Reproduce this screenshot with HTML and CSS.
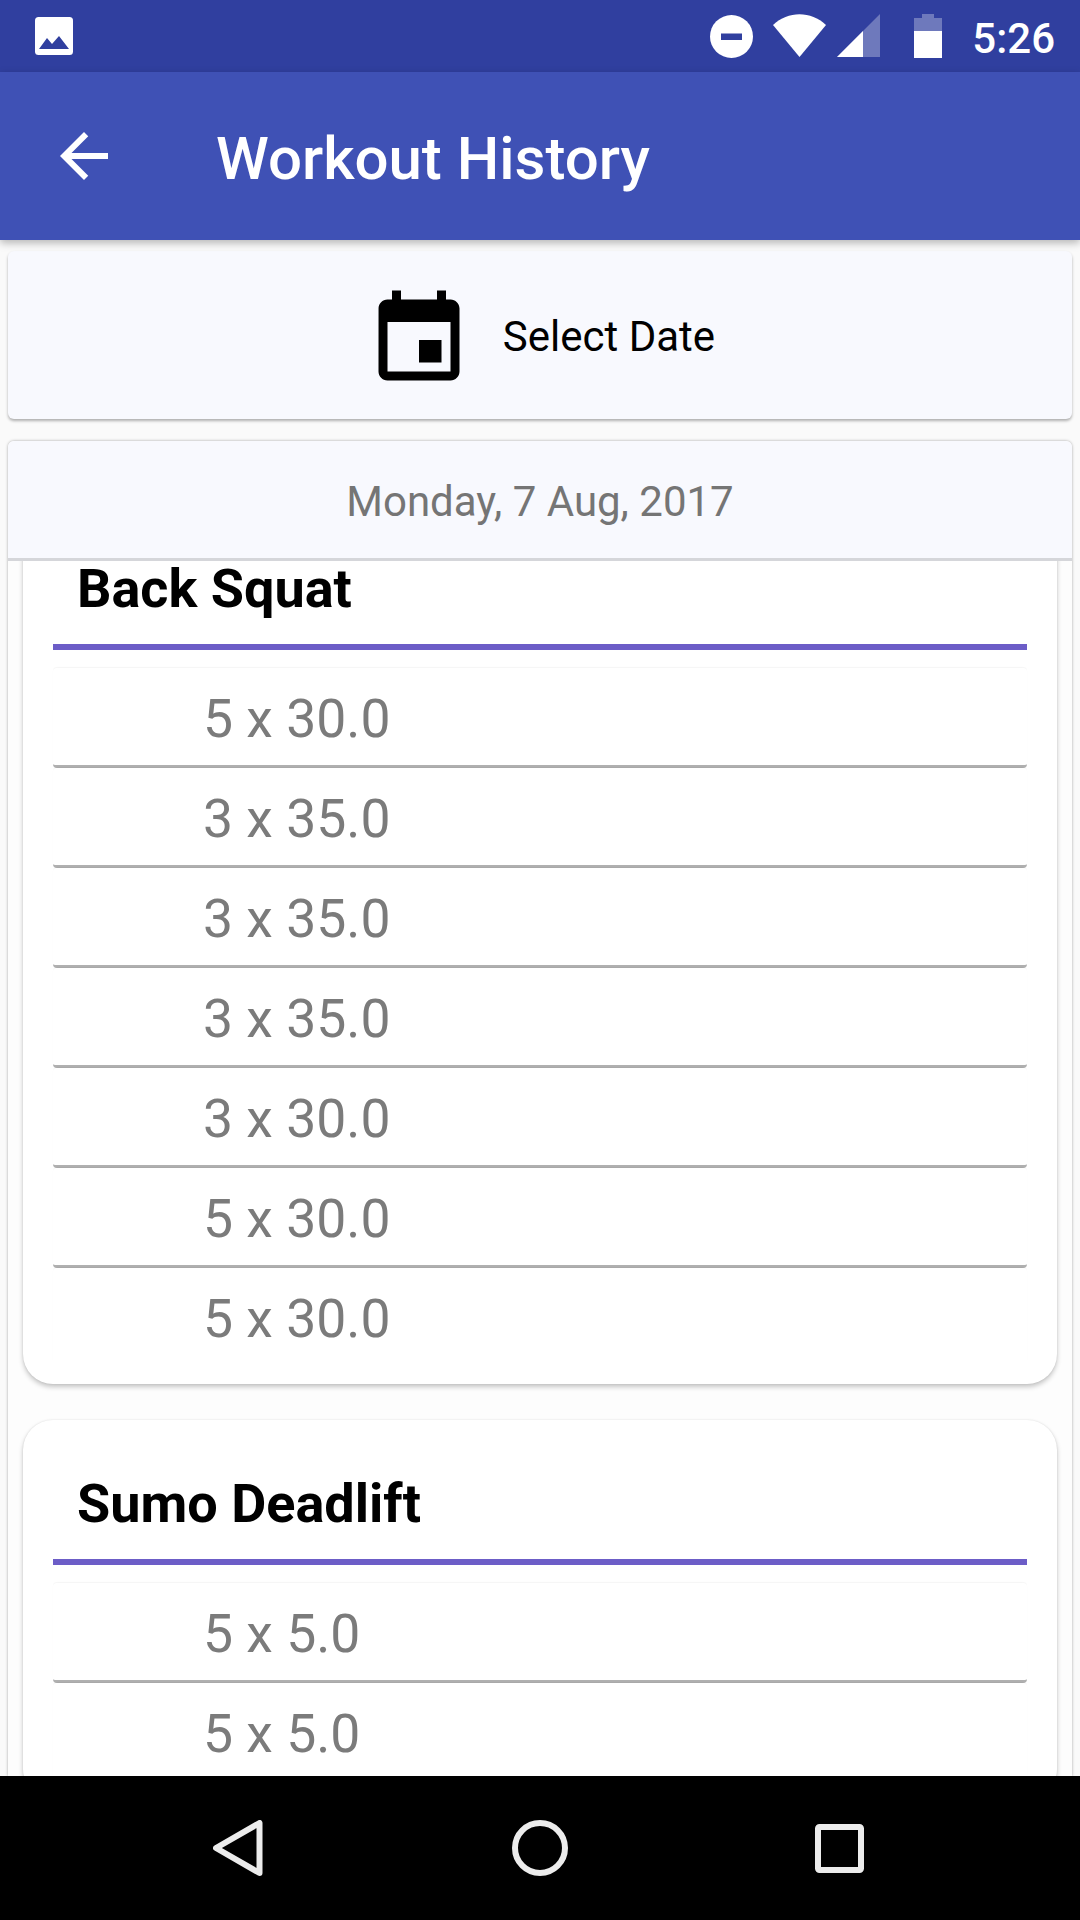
FILE: index.html
```html
<!DOCTYPE html>
<html lang="en">
<head>
<meta charset="utf-8">
<title>Workout History</title>
<link rel="stylesheet" href="styles.css">
</head>
<body>
<div class="phone">
  <header class="status-bar">
    <svg class="ic-picture" viewBox="0 0 38 38"><rect width="38" height="38" rx="3.5" fill="#fff"/><path d="M4 32 L12 21 L17 27 L24 19 L34 32 Z" fill="#303f9f"/></svg>
    <div class="status-right">
      <svg class="ic-dnd" viewBox="0 0 43 43"><circle cx="21.5" cy="21.5" r="21.5" fill="#fff"/><rect x="11" y="18.5" width="21" height="6.5" fill="#303f9f"/></svg>
      <svg class="ic-wifi" viewBox="0 0 53 43"><path d="M0 11 C15 -3.5 38 -3.5 53 11 L26.5 43 Z" fill="#fff"/></svg>
      <svg class="ic-signal" viewBox="0 0 43 43"><path d="M0 43 L43 0 V43 Z" fill="#fff" fill-opacity=".3"/><path d="M0 43 L26 17 V43 Z" fill="#fff"/></svg>
      <svg class="ic-battery" viewBox="0 0 28 44"><path d="M8 0 H20 V4 H28 V17 H0 V4 H8 Z" fill="#fff" fill-opacity=".3"/><rect y="17" width="28" height="27" fill="#fff"/></svg>
      <span class="clock">5:26</span>
    </div>
  </header>

  <div class="toolbar">
    <svg class="ic-back" viewBox="0 0 24 24"><path d="M20 11H7.83l5.59-5.59L12 4l-8 8 8 8 1.41-1.41L7.83 13H20v-2z" fill="#fff"/></svg>
    <h1 class="toolbar-title">Workout History</h1>
  </div>

  <main class="content">
    <section class="select-date">
      <svg class="ic-event" viewBox="0 0 24 24"><path d="M17 12h-5v5h5v-5zM16 1v2H8V1H6v2H5c-1.11 0-1.99.9-1.99 2L3 19c0 1.1.89 2 2 2h14c1.1 0 2-.9 2-2V5c0-1.1-.9-2-2-2h-1V1h-2zm3 18H5V8h14v11z" fill="#000"/></svg>
      <span class="select-label">Select Date</span>
    </section>

    <section class="history">
      <div class="history-date">Monday, 7 Aug, 2017</div>
      <div class="history-scroll">
        <div class="history-list">
          <article class="exercise">
            <h2 class="exercise-name">Back Squat</h2>
            <div class="exercise-rule"></div>
            <ul class="sets">
              <li class="set">5 x 30.0</li>
              <li class="set">3 x 35.0</li>
              <li class="set">3 x 35.0</li>
              <li class="set">3 x 35.0</li>
              <li class="set">3 x 30.0</li>
              <li class="set">5 x 30.0</li>
              <li class="set">5 x 30.0</li>
            </ul>
          </article>
          <article class="exercise">
            <h2 class="exercise-name">Sumo Deadlift</h2>
            <div class="exercise-rule"></div>
            <ul class="sets">
              <li class="set">5 x 5.0</li>
              <li class="set">5 x 5.0</li>
            </ul>
          </article>
        </div>
      </div>
    </section>
  </main>

  <nav class="nav-bar">
    <div class="nav-btn"><svg class="ic-nav-back" viewBox="0 0 50 56"><path d="M46.5 3 V53 L3 28 Z" fill="none" stroke="#ececec" stroke-width="6" stroke-linejoin="round"/></svg></div>
    <div class="nav-btn"><svg class="ic-nav-home" viewBox="0 0 56 56"><circle cx="28" cy="28" r="25" fill="none" stroke="#ececec" stroke-width="6"/></svg></div>
    <div class="nav-btn"><svg class="ic-nav-recent" viewBox="0 0 49 49"><rect x="3" y="3" width="43" height="43" rx="1.5" fill="none" stroke="#ececec" stroke-width="6"/></svg></div>
  </nav>
</div>
</body>
</html>
```
FILE: styles.css
```css
* { box-sizing: border-box; }
html, body { margin: 0; padding: 0; }
body { font-family: Roboto, "Noto Sans", sans-serif; background: #fafafa; }
svg { display: block; flex: none; }

.phone { width: 1080px; height: 1920px; display: flex; flex-direction: column; overflow: hidden; background: #fafafa; }

.status-bar { height: 72px; flex: none; background: #303f9f; display: flex; align-items: flex-start; padding: 14px 25px 0 35px; }
.ic-picture { width: 38px; height: 38px; margin-top: 3px; }
.status-right { margin-left: auto; display: flex; align-items: flex-start; }
.ic-dnd { width: 43px; height: 43px; margin-top: 1px; }
.ic-wifi { width: 53px; height: 43px; margin-left: 20px; }
.ic-signal { width: 43px; height: 43px; margin-left: 11px; }
.ic-battery { width: 28px; height: 44px; margin-left: 34px; }
.clock { font-size: 42px; font-weight: 500; line-height: 44px; color: #fff; margin-left: 30px; margin-top: 3px; }

.toolbar { height: 168px; flex: none; background: #3f51b5; display: flex; align-items: center; padding-left: 48px; position: relative; z-index: 2; box-shadow: 0 3px 8px rgba(0,0,0,.28); }
.ic-back { width: 72px; height: 72px; }
.toolbar-title { margin: 0 0 0 96px; padding-top: 5px; font-size: 60px; font-weight: 500; color: #fff; line-height: 72px; }

.content { flex: 1; min-height: 0; display: flex; flex-direction: column; padding: 11px 8px 0; gap: 22px; }

.select-date { height: 168px; flex: none; background: #f8f9fe; border-radius: 6px; box-shadow: 0 2px 3px rgba(0,0,0,.3); display: flex; align-items: center; justify-content: center; gap: 30px; }
.ic-event { width: 108px; height: 108px; margin-top: 10px; }
.select-label { font-size: 42px; color: #000; padding-top: 2px; }

.history { flex: 1; min-height: 0; display: flex; flex-direction: column; border-radius: 6px 6px 0 0; box-shadow: 0 0 3px rgba(0,0,0,.35); background: #fff; }
.history-date { height: 120px; flex: none; padding-top: 3px; background: #f8f9fe; border-bottom: 3px solid #d5d6da; border-radius: 6px 6px 0 0; display: flex; align-items: center; justify-content: center; font-size: 42px; color: #757575; }
.history-scroll { flex: 1; min-height: 0; overflow: hidden; background: #fdfdfd; }
.history-list { margin-top: -56px; padding: 0 15px; display: flex; flex-direction: column; gap: 36px; }

.exercise { background: #fff; border-radius: 30px; padding: 0 30px 19px; box-shadow: 0 3px 5px rgba(0,0,0,.22), 0 0 2px rgba(0,0,0,.1); }
.exercise-name { margin: 0; height: 139px; padding: 52px 0 0 24px; font-size: 54px; line-height: 64px; font-weight: 700; color: #000; }
.exercise-rule { height: 6px; background: #6c5dc7; margin-bottom: 18px; }
.sets { list-style: none; margin: 0; padding: 0; }
.set { height: 100px; padding: 4px 0 0 150px; font-size: 53.5px; color: #7b7b7b; display: flex; align-items: center; border-bottom: 3px solid #b0b0b0; border-radius: 4px; box-shadow: 0 -1px 1px rgba(0,0,0,.04); }
.set:last-child { border-bottom: 0; height: 97px; }

.nav-bar { height: 144px; flex: none; background: #000; display: flex; justify-content: center; align-items: center; position: relative; z-index: 2; }
.nav-btn { width: 300px; display: flex; justify-content: center; }
.ic-nav-back { width: 50px; height: 56px; margin-left: -4px; }
.ic-nav-home { width: 56px; height: 56px; }
.ic-nav-recent { width: 49px; height: 49px; margin-left: -2px; }
```
